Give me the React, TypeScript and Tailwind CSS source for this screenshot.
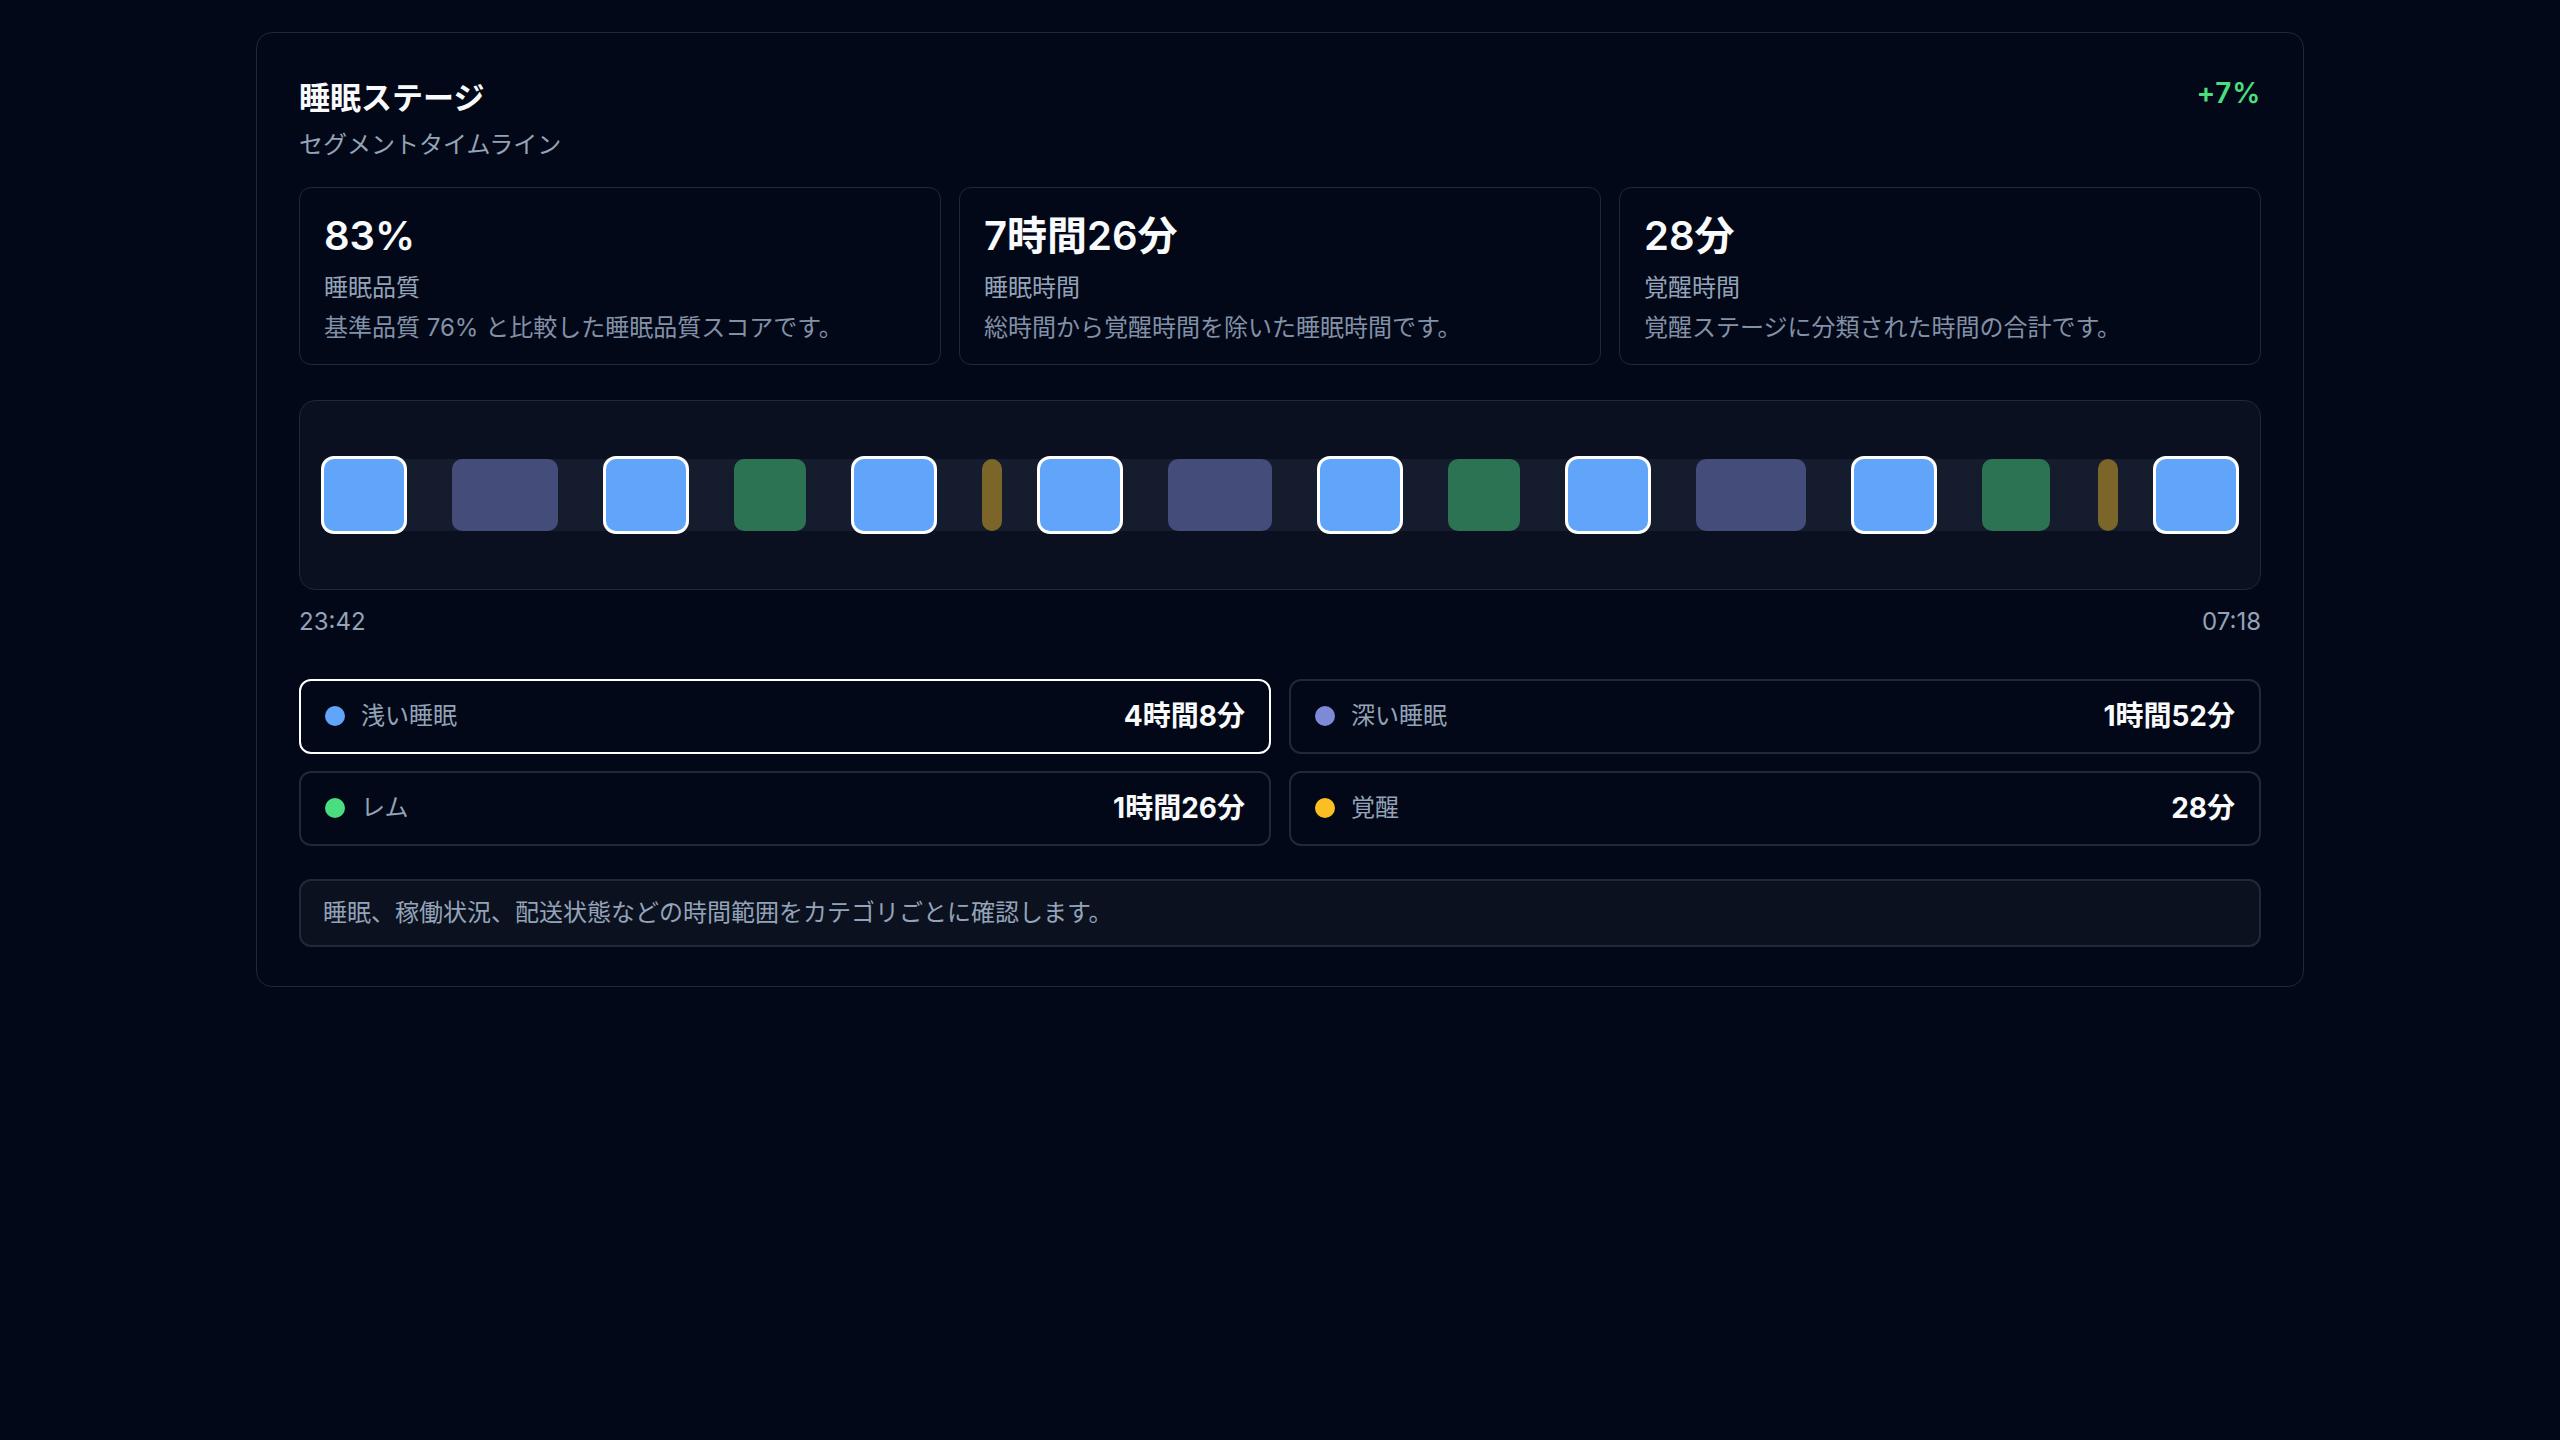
import clsx from "clsx";

type Stage = "light" | "deep" | "rem" | "awake";

const stageColor: Record<Stage, string> = {
  light: "bg-[#60a5fa]",
  deep: "bg-[#7e8ad6]",
  rem: "bg-[#4ade80]",
  awake: "bg-[#fbbf24]",
};

// widths / gaps measured in px
const segments: { stage: Stage; width: number; gap: number }[] = [
  { stage: "light", width: 80, gap: 0 },
  { stage: "deep", width: 106, gap: 48 },
  { stage: "light", width: 80, gap: 48 },
  { stage: "rem", width: 72, gap: 48 },
  { stage: "light", width: 80, gap: 48 },
  { stage: "awake", width: 20, gap: 48 },
  { stage: "light", width: 80, gap: 38 },
  { stage: "deep", width: 104, gap: 48 },
  { stage: "light", width: 80, gap: 48 },
  { stage: "rem", width: 72, gap: 48 },
  { stage: "light", width: 80, gap: 48 },
  { stage: "deep", width: 110, gap: 48 },
  { stage: "light", width: 80, gap: 48 },
  { stage: "rem", width: 68, gap: 48 },
  { stage: "awake", width: 20, gap: 48 },
  { stage: "light", width: 80, gap: 38 },
];

const stats = [
  { value: "83%", label: "睡眠品質", desc: "基準品質 76% と比較した睡眠品質スコアです。" },
  { value: "7時間26分", label: "睡眠時間", desc: "総時間から覚醒時間を除いた睡眠時間です。" },
  { value: "28分", label: "覚醒時間", desc: "覚醒ステージに分類された時間の合計です。" },
];

const legend: { stage: Stage; label: string; total: string }[] = [
  { stage: "light", label: "浅い睡眠", total: "4時間8分" },
  { stage: "deep", label: "深い睡眠", total: "1時間52分" },
  { stage: "rem", label: "レム", total: "1時間26分" },
  { stage: "awake", label: "覚醒", total: "28分" },
];

const selected: Stage = "light";

export default function App() {
  return (
    <div className="min-h-screen bg-[#020817] pt-8 font-['Inter','Noto_Sans_CJK_JP',sans-serif] text-[#f8fafc]">
      <div className="mx-auto w-[2048px] rounded-2xl border border-[#1e293b] bg-[#020817] px-[42px] pb-[39px] pt-[42px]">
        <div className="flex items-start justify-between">
          <div>
            <h2 className="text-[31px] font-bold leading-[46.5px]">睡眠ステージ</h2>
            <p className="mt-[5px] text-[24px] leading-9 text-[#94a3b8]">セグメントタイムライン</p>
          </div>
          <span className="text-[28px] font-semibold leading-9 tracking-wide text-[#4ade80]">+7%</span>
        </div>

        <div className="mt-6 grid grid-cols-3 gap-[18px]">
          {stats.map((s) => (
            <div key={s.label} className="rounded-xl border border-[#1e293b] px-6 pb-5 pt-6">
              <div className="text-[40px] font-semibold leading-[48px]">{s.value}</div>
              <div className="mt-3 text-[24px] leading-8 text-[#94a3b8]">{s.label}</div>
              <div className="mt-2 text-[24px] leading-8 text-[#8391a7]">{s.desc}</div>
            </div>
          ))}
        </div>

        <div className="mt-[35px] rounded-2xl border border-[#1e293b] bg-[#0a101f] px-6 py-[58px]">
          <div className="flex h-[72px] bg-[#141c2e]">
            {segments.map((seg, i) => (
              <div
                key={i}
                style={{ width: seg.width, marginLeft: seg.gap }}
                className={clsx(
                  "h-full shrink-0 rounded-[10px]",
                  stageColor[seg.stage],
                  seg.stage === selected ? "ring-[3px] ring-white" : "opacity-[0.45]"
                )}
              />
            ))}
          </div>
        </div>
        <div className="mt-3.5 flex justify-between text-[24px] leading-9 text-[#94a3b8]">
          <span>23:42</span>
          <span>07:18</span>
        </div>

        <div className="mt-[39px] grid grid-cols-2 gap-x-[18px] gap-y-[17px]">
          {legend.map((l) => (
            <div
              key={l.stage}
              className={clsx(
                "flex h-[75px] items-center justify-between rounded-xl border-2 px-6",
                l.stage === selected ? "border-white" : "border-[#1e293b]"
              )}
            >
              <div className="flex items-center gap-4">
                <span className={clsx("h-5 w-5 rounded-full", stageColor[l.stage])} />
                <span className="text-[24px] text-[#94a3b8]">{l.label}</span>
              </div>
              <span className="text-[28px] font-bold">{l.total}</span>
            </div>
          ))}
        </div>

        <div className="mt-[33px] rounded-xl border-2 border-[#1e293b] bg-[#0b111f] px-[22px] py-3.5 text-[24px] leading-9 text-[#94a3b8]">
          睡眠、稼働状況、配送状態などの時間範囲をカテゴリごとに確認します。
        </div>
      </div>
    </div>
  );
}
